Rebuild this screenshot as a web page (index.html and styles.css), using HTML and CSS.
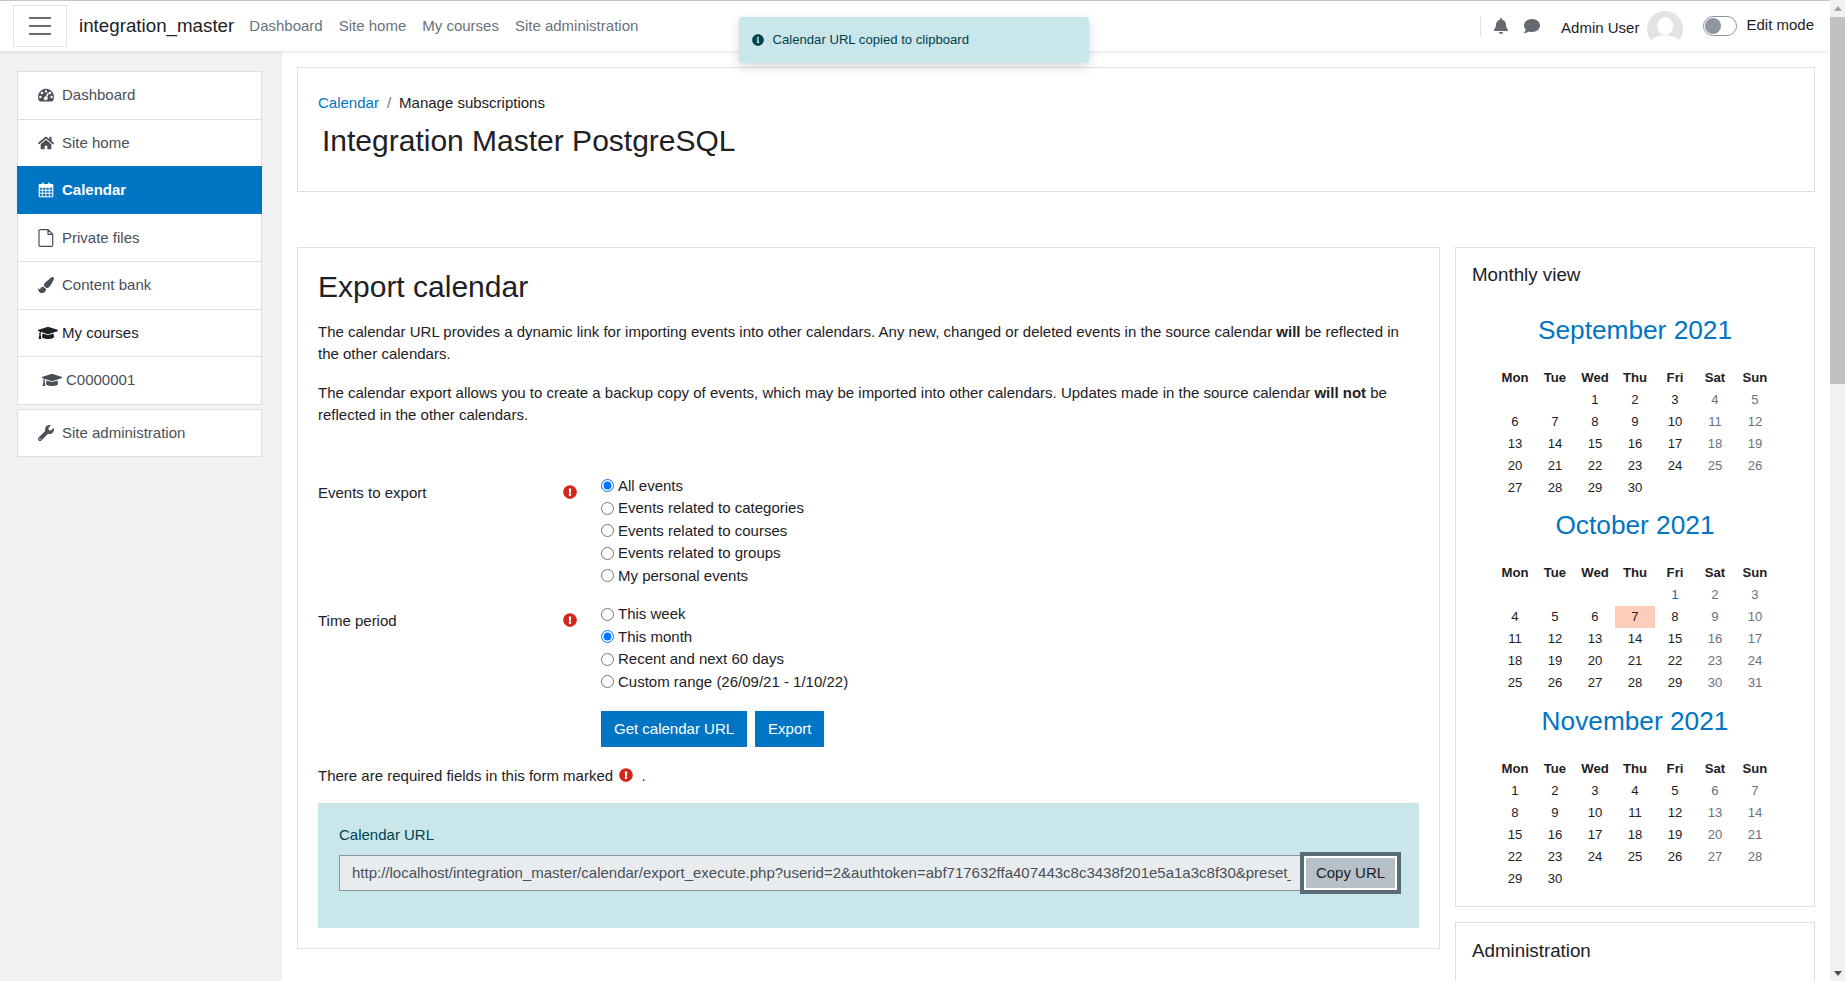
FILE: index.html
```html
<!DOCTYPE html>
<html lang="en">
<head>
  <meta charset="UTF-8">
  <meta name="viewport" content="width=device-width, initial-scale=1.0">
  <title>Export calendar</title>
  <link rel="stylesheet" href="styles.css">
</head>
<body>
  <svg class="icon-defs" width="0" height="0" aria-hidden="true">
    <symbol id="i-cap" viewBox="0 0 640 512"><path d="M622.34 153.2L343.4 67.5c-15.2-4.67-31.6-4.67-46.79 0L17.66 153.2c-23.54 7.23-23.54 38.36 0 45.59l48.63 14.94c-10.67 13.19-17.23 29.28-17.88 46.9C38.78 266.15 32 276.11 32 288c0 10.78 5.68 19.85 13.86 25.65L20.33 428.53C18.11 438.52 25.71 448 35.94 448h56.11c10.24 0 17.84-9.48 15.62-19.47L82.14 313.65C90.32 307.85 96 298.78 96 288c0-11.57-6.47-21.25-15.66-26.87.76-15.02 8.44-28.3 20.69-36.72L296.6 284.5c9.06 2.78 26.44 6.25 46.79 0l278.95-85.7c23.55-7.24 23.55-38.36 0-45.6zM352.79 315.09c-28.53 8.76-52.84 3.92-65.59 0l-145.02-44.55L128 384c0 35.35 85.96 64 192 64s192-28.65 192-64l-14.18-113.47-145.03 44.56z"/></symbol>
    <symbol id="i-required" viewBox="0 0 512 512"><path d="M504 256c0 136.997-111.043 248-248 248S8 392.997 8 256C8 119.083 119.043 8 256 8s248 111.083 248 248zm-248 50c-25.405 0-46 20.595-46 46s20.595 46 46 46 46-20.595 46-46-20.595-46-46-46zm-43.673-165.346l7.418 136c.347 6.364 5.609 11.346 11.982 11.346h48.546c6.373 0 11.635-4.982 11.982-11.346l7.418-136c.375-6.874-5.098-12.654-11.982-12.654h-63.383c-6.884 0-12.356 5.78-11.981 12.654z"/></symbol>
  </svg>

  <div class="page">
    <nav class="navbar">
      <button class="nav-toggle" aria-label="Menu"><span></span><span></span><span></span></button>
      <span class="brand">integration_master</span>
      <a class="nav-link">Dashboard</a>
      <a class="nav-link">Site home</a>
      <a class="nav-link">My courses</a>
      <a class="nav-link">Site administration</a>

      <div class="nav-right">
        <div class="nav-icons">
          <svg class="nav-icon" viewBox="0 0 448 512"><path d="M224 512c35.32 0 63.97-28.65 63.97-64H160.03c0 35.35 28.65 64 63.97 64zm215.39-149.71c-19.32-20.76-55.47-51.99-55.47-154.29 0-77.7-54.48-139.9-127.94-155.16V32c0-17.67-14.32-32-31.98-32s-31.98 14.33-31.98 32v20.84C118.56 68.1 64.08 130.3 64.08 208c0 102.3-36.15 133.53-55.47 154.29-6 6.45-8.66 14.16-8.61 21.71.11 16.4 12.98 32 32.1 32h383.8c19.12 0 32-15.6 32.1-32 .05-7.55-2.61-15.27-8.61-21.71z"/></svg>
          <svg class="nav-icon nav-icon-chat" viewBox="0 0 512 512"><path d="M256 32C114.6 32 0 125.1 0 240c0 49.6 21.4 95 57 130.7C44.5 421.1 2.7 466 2.2 466.5c-2.2 2.3-2.8 5.7-1.5 8.7S4.8 480 8 480c66.3 0 116-31.8 140.6-51.4 32.7 12.3 69 19.4 107.4 19.4 141.4 0 256-93.1 256-208S397.4 32 256 32z"/></svg>
        </div>
        <span class="user-name">Admin User</span>
        <svg class="avatar" viewBox="0 0 36 36">
          <circle cx="18" cy="18" r="18" fill="#e3e3e3"/>
          <ellipse cx="18" cy="15" rx="8" ry="9" fill="#fff"/>
          <path d="M3 30c3-3 7-5 12-5.500h6c5 .5 9 2.500 12 5.500v6H3z" fill="#fff"/>
        </svg>
        <span class="switch"><span class="switch-thumb"></span></span>
        <span class="edit-label">Edit mode</span>
      </div>
    </nav>

    <div class="toast">
      <svg class="toast-icon" viewBox="0 0 512 512"><path d="M256 8C119.043 8 8 119.083 8 256c0 136.997 111.043 248 248 248s248-111.003 248-248C504 119.083 392.957 8 256 8zm0 110c23.196 0 42 18.804 42 42s-18.804 42-42 42-42-18.804-42-42 18.804-42 42-42zm56 254c0 6.627-5.373 12-12 12h-88c-6.627 0-12-5.373-12-12v-24c0-6.627 5.373-12 12-12h12v-64h-12c-6.627 0-12-5.373-12-12v-24c0-6.627 5.373-12 12-12h64c6.627 0 12 5.373 12 12v100h12c6.627 0 12 5.373 12 12v24z"/></svg>
      Calendar URL copied to clipboard
    </div>

    <div class="layout">
      <aside class="sidebar">
        <ul class="side-list">
          <li class="side-item">
            <svg class="side-icon side-icon-dome" viewBox="1 2 22 19"><path fill-rule="evenodd" d="M12 3a11 11 0 0 1 9.500 16.500c-.4.7-1 1-1.700 1H4.200c-.7 0-1.300-.3-1.700-1A11 11 0 0 1 12 3zm0 1.800a1.700 1.700 0 1 0 0 3.400 1.700 1.700 0 0 0 0-3.400zM6.500 7a1.700 1.700 0 1 0 0 3.400 1.700 1.700 0 0 0 0-3.400zm11 0a1.700 1.700 0 1 0 0 3.400 1.700 1.700 0 0 0 0-3.400zM4.300 12.500a1.700 1.700 0 1 0 0 3.400 1.700 1.700 0 0 0 0-3.400zm15.400 0a1.700 1.700 0 1 0 0 3.400 1.700 1.700 0 0 0 0-3.400zM14.700 8.200l-3.100 5.300a2.600 2.600 0 1 0 2.100 1l2.400-5.700z"/></svg>
            Dashboard
          </li>
          <li class="side-item">
            <svg class="side-icon" viewBox="0 0 576 512"><path d="M280.37 148.26L96 300.11V464a16 16 0 0 0 16 16l112.06-.29a16 16 0 0 0 15.92-16V368a16 16 0 0 1 16-16h64a16 16 0 0 1 16 16v95.64a16 16 0 0 0 16 16.05L464 480a16 16 0 0 0 16-16V300L295.67 148.26a12.19 12.19 0 0 0-15.3 0zM571.6 251.47L488 182.56V44.05a12 12 0 0 0-12-12h-56a12 12 0 0 0-12 12v72.61L318.47 43a48 48 0 0 0-61 0L4.34 251.47a12 12 0 0 0-1.6 16.9l25.5 31A12 12 0 0 0 45.15 301l235.22-193.74a12.19 12.19 0 0 1 15.3 0L530.9 301a12 12 0 0 0 16.9-1.6l25.5-31a12 12 0 0 0-1.7-16.93z"/></svg>
            Site home
          </li>
          <li class="side-item side-active">
            <svg class="side-icon side-icon-tall" viewBox="0 0 24 24"><path fill-rule="evenodd" d="M6 1h2.500v2h7V1H18v2h3.500A1.500 1.500 0 0 1 23 4.500v17a1.500 1.500 0 0 1-1.500 1.500h-19A1.500 1.500 0 0 1 1 21.500v-17A1.500 1.500 0 0 1 2.500 3H6zM2.600 8.500v3h3.600v-3zm5 0v3h3.600v-3zm5 0v3h3.600v-3zm5 0v3h3.800v-3zm-15 4.500v3h3.600v-3zm5 0v3h3.600v-3zm5 0v3h3.600v-3zm5 0v3h3.800v-3zm-15 4.500v3.900h3.600v-3.900zm5 0v3.900h3.600v-3.900zm5 0v3.900h3.600v-3.900zm5 0v3.900h3.800v-3.900z"/></svg>
            Calendar
          </li>
          <li class="side-item">
            <svg class="side-icon side-icon-tall" viewBox="0 0 16 18"><path d="M2 .6h8l4.700 4.700v11a1 1 0 0 1-1 1H2a1 1 0 0 1-1-1v-14.700a1 1 0 0 1 1-1zM10 .6v4.700h4.700" fill="none" stroke="currentColor" stroke-width="1.200"/></svg>
            Private files
          </li>
          <li class="side-item">
            <svg class="side-icon" viewBox="0 0 512 512"><path d="M167.02 309.34c-40.12 2.58-76.53 17.86-97.19 72.3-2.35 6.21-8 9.98-14.59 9.98-11.11 0-45.46-27.67-55.25-34.35C0 439.62 37.93 512 128 512c75.86 0 128-43.77 128-120.19 0-3.11-.65-6.08-.97-9.13l-88.01-73.34zM457.89 0c-15.16 0-29.37 6.71-40.21 16.45C213.27 199.05 192 203.34 192 257.09c0 13.7 3.25 26.76 8.73 38.7l63.82 53.18c7.21 1.8 14.64 3.03 22.39 3.03 62.11 0 98.11-45.47 211.16-256.46 7.38-14.35 13.9-29.85 13.9-45.99C512 20.64 486 0 457.89 0z"/></svg>
            Content bank
          </li>
          <li class="side-item side-heading">
            <svg class="side-icon" viewBox="0 0 640 512"><use href="#i-cap"/></svg>
            My courses
          </li>
          <li class="side-item side-sub">
            <svg class="side-icon" viewBox="0 0 640 512"><use href="#i-cap"/></svg>
            C0000001
          </li>
        </ul>
        <ul class="side-list">
          <li class="side-item">
            <svg class="side-icon" viewBox="0 0 512 512"><path d="M507.73 109.1c-2.24-9.03-13.54-12.09-20.12-5.51l-74.36 74.36-67.88-11.31-11.31-67.88 74.36-74.36c6.62-6.62 3.43-17.9-5.66-20.16-47.38-11.74-99.55.91-136.58 37.93-39.64 39.64-50.55 97.1-34.05 147.2L18.74 402.76c-24.99 24.99-24.99 65.51 0 90.5 24.99 24.99 65.51 24.99 90.5 0l213.21-213.21c50.12 16.71 107.47 5.68 147.37-34.22 37.07-37.07 49.7-89.32 37.91-136.73zM64 472c-13.25 0-24-10.75-24-24 0-13.26 10.75-24 24-24s24 10.74 24 24c0 13.25-10.75 24-24 24z"/></svg>
            Site administration
          </li>
        </ul>
      </aside>

      <main class="content">
        <header class="card page-header">
          <div class="breadcrumb"><a>Calendar</a><span class="crumb-sep">/</span><span>Manage subscriptions</span></div>
          <h1>Integration Master PostgreSQL</h1>
        </header>

        <div class="columns">
          <section class="card export-card">
            <h2>Export calendar</h2>
            <p>The calendar URL provides a dynamic link for importing events into other calendars. Any new, changed or deleted events in the source calendar <strong>will</strong> be reflected in the other calendars.</p>
            <p>The calendar export allows you to create a backup copy of events, which may be imported into other calendars. Updates made in the source calendar <strong>will not</strong> be reflected in the other calendars.</p>

            <form class="export-form">
              <div class="form-row">
                <div class="form-label">Events to export <svg class="required"><use href="#i-required"/></svg></div>
                <div class="radio-group">
                  <label><input type="radio" name="events" checked> All events</label>
                  <label><input type="radio" name="events"> Events related to categories</label>
                  <label><input type="radio" name="events"> Events related to courses</label>
                  <label><input type="radio" name="events"> Events related to groups</label>
                  <label><input type="radio" name="events"> My personal events</label>
                </div>
              </div>
              <div class="form-row">
                <div class="form-label">Time period <svg class="required"><use href="#i-required"/></svg></div>
                <div class="radio-group">
                  <label><input type="radio" name="period"> This week</label>
                  <label><input type="radio" name="period" checked> This month</label>
                  <label><input type="radio" name="period"> Recent and next 60 days</label>
                  <label><input type="radio" name="period"> Custom range (26/09/21 - 1/10/22)</label>
                </div>
              </div>
              <div class="form-actions">
                <button type="button" class="btn">Get calendar URL</button>
                <button type="button" class="btn">Export</button>
              </div>
              <div class="required-note">There are required fields in this form marked <svg class="required"><use href="#i-required"/></svg> .</div>
            </form>

            <div class="url-box">
              <div class="url-label">Calendar URL</div>
              <div class="url-row">
                <input class="url-input" type="text" readonly value="http://localhost/integration_master/calendar/export_execute.php?userid=2&amp;authtoken=abf717632ffa407443c8c3438f201e5a1a3c8f30&amp;preset_what=all&amp;preset_time=monthnow">
                <button type="button" class="copy-btn">Copy URL</button>
              </div>
            </div>
          </section>

          <aside class="side-col">
            <section class="card month-card">
              <h5>Monthly view</h5>

              <h3 class="month-title">September 2021</h3>
              <table class="month">
                <tr><th>Mon</th><th>Tue</th><th>Wed</th><th>Thu</th><th>Fri</th><th>Sat</th><th>Sun</th></tr>
                <tr><td></td><td></td><td>1</td><td>2</td><td>3</td><td class="we">4</td><td class="we">5</td></tr>
                <tr><td>6</td><td>7</td><td>8</td><td>9</td><td>10</td><td class="we">11</td><td class="we">12</td></tr>
                <tr><td>13</td><td>14</td><td>15</td><td>16</td><td>17</td><td class="we">18</td><td class="we">19</td></tr>
                <tr><td>20</td><td>21</td><td>22</td><td>23</td><td>24</td><td class="we">25</td><td class="we">26</td></tr>
                <tr><td>27</td><td>28</td><td>29</td><td>30</td><td></td><td></td><td></td></tr>
              </table>

              <h3 class="month-title">October 2021</h3>
              <table class="month">
                <tr><th>Mon</th><th>Tue</th><th>Wed</th><th>Thu</th><th>Fri</th><th>Sat</th><th>Sun</th></tr>
                <tr><td></td><td></td><td></td><td></td><td class="ev">1</td><td class="we">2</td><td class="we">3</td></tr>
                <tr><td>4</td><td>5</td><td>6</td><td class="today">7</td><td>8</td><td class="we">9</td><td class="we">10</td></tr>
                <tr><td>11</td><td>12</td><td>13</td><td>14</td><td>15</td><td class="we">16</td><td class="we">17</td></tr>
                <tr><td>18</td><td>19</td><td>20</td><td>21</td><td>22</td><td class="we">23</td><td class="we">24</td></tr>
                <tr><td>25</td><td>26</td><td>27</td><td>28</td><td>29</td><td class="we">30</td><td class="we">31</td></tr>
              </table>

              <h3 class="month-title">November 2021</h3>
              <table class="month">
                <tr><th>Mon</th><th>Tue</th><th>Wed</th><th>Thu</th><th>Fri</th><th>Sat</th><th>Sun</th></tr>
                <tr><td>1</td><td>2</td><td>3</td><td>4</td><td>5</td><td class="we">6</td><td class="we">7</td></tr>
                <tr><td>8</td><td>9</td><td>10</td><td>11</td><td>12</td><td class="we">13</td><td class="we">14</td></tr>
                <tr><td>15</td><td>16</td><td>17</td><td>18</td><td>19</td><td class="we">20</td><td class="we">21</td></tr>
                <tr><td>22</td><td>23</td><td>24</td><td>25</td><td>26</td><td class="we">27</td><td class="we">28</td></tr>
                <tr><td>29</td><td>30</td><td></td><td></td><td></td><td></td><td></td></tr>
              </table>
            </section>

            <section class="card admin-card">
              <h5>Administration</h5>
            </section>
          </aside>
        </div>
      </main>
    </div>
  </div>

  <div class="scrollbar">
    <span class="sb-arrow sb-up"></span>
    <div class="sb-track"><div class="sb-thumb"></div></div>
    <span class="sb-arrow sb-down"></span>
  </div>
</body>
</html>
```

FILE: styles.css
```css
* {
  box-sizing: border-box;
}

html, body {
  height: 100%;
  margin: 0;
  overflow: hidden;
}

body {
  display: flex;
  font-family: "Liberation Sans", Arial, sans-serif;
  font-size: 15px;
  line-height: 22.5px;
  color: #1d2125;
  background-color: #fff;
}

.icon-defs {
  position: absolute;
}

.page {
  flex: 1;
  min-width: 0;
  height: 981px;
  overflow: hidden;
  position: relative;
}

/* top bar */
.navbar {
  height: 51px;
  display: flex;
  align-items: center;
  background-color: #fff;
  border-top: 1px solid #c4c4c4;
  box-shadow: 0 2px 4px rgba(0, 0, 0, 0.08);
  position: relative;
}

.nav-toggle {
  width: 54px;
  height: 42px;
  margin-left: 13px;
  margin-right: 12px;
  padding: 0;
  border: 1px solid #e3e3e3;
  background: #fff;
  display: flex;
  flex-direction: column;
  align-items: center;
  justify-content: center;
  gap: 6px;
}

.nav-toggle span {
  display: block;
  width: 22px;
  height: 2px;
  background-color: #6a6a6a;
}

.brand {
  font-size: 18.75px;
  margin-right: 15px;
}

.nav-link {
  color: #6a737b;
  margin-right: 16px;
}

.nav-right {
  margin-left: auto;
  display: flex;
  align-items: center;
  padding-right: 16px;
}

.nav-icons {
  display: flex;
  align-items: center;
  height: 21px;
  padding-left: 13px;
  border-left: 1px solid #e3e3e3;
}

.nav-icon {
  width: 14px;
  height: 16px;
  fill: #646a70;
}

.nav-icon-chat {
  margin-left: 16px;
  width: 16px;
}

.user-name {
  margin-left: 21px;
  margin-top: 5px;
}

.avatar {
  width: 36px;
  height: 36px;
  margin-left: 8px;
  margin-top: 5px;
}

.switch {
  width: 34px;
  height: 20px;
  margin-left: 20px;
  margin-top: -1px;
  border: 1px solid #8f959e;
  border-radius: 10px;
  background-color: #fff;
  padding: 1px;
}

.switch-thumb {
  display: block;
  width: 16px;
  height: 16px;
  border-radius: 50%;
  background-color: #8f959e;
}

.edit-label {
  margin-left: 9px;
  margin-top: -1px;
}

.toast {
  position: absolute;
  left: 739px;
  top: 17px;
  width: 350px;
  height: 46px;
  display: flex;
  align-items: center;
  gap: 8.500px;
  padding-left: 13px;
  font-size: 13.13px;
  color: #00434e;
  background-color: #c9e6ea;
  border-radius: 3px;
  box-shadow: 0 4px 12px rgba(0, 0, 0, 0.15);
}

.toast-icon {
  width: 12px;
  height: 12px;
  fill: #00434e;
}

/* sidebar */
.layout {
  display: flex;
}

.sidebar {
  width: 282px;
  height: 930px;
  padding: 20px 20px 0 17px;
  background-color: #f2f2f2;
  flex-shrink: 0;
}

.side-list {
  list-style: none;
  margin: 0 0 4.400px;
  padding: 0;
  background-color: #fff;
  border: 1px solid #dfdfdf;
}

.side-item {
  display: flex;
  align-items: center;
  height: 47.5px;
  padding-left: 20px;
  color: #495057;
  border-bottom: 1px solid #dfdfdf;
}

.side-item:last-child {
  border-bottom: 0;
  height: 46.5px;
}

.side-active {
  color: #fff;
  font-weight: bold;
  background-color: #0075c3;
  height: 48.4px;
  margin: -1px -1px 0.11px;
  padding-left: 21px;
  border-bottom: 0;
}

.side-heading {
  color: #1d2125;
}

.side-sub {
  padding-left: 24px;
}

.side-icon {
  width: 16px;
  height: 16px;
  margin-right: 8px;
  fill: currentColor;
  flex-shrink: 0;
}

.side-icon-tall {
  height: 18px;
}

.side-icon-dome {
  height: 14px;
}

.side-heading .side-icon,
.side-sub .side-icon {
  width: 20px;
  margin-right: 4px;
}

/* main */
.content {
  flex: 1;
  min-width: 0;
  padding: 16px 15px 0;
}

.card {
  background-color: #fff;
  border: 1px solid #dfdfdf;
}

.page-header {
  height: 125px;
  padding: 24px 20px 0;
}

.breadcrumb {
  display: flex;
}

.breadcrumb a {
  color: #0075c3;
}

.crumb-sep {
  color: #6a737b;
  margin: 0 8px;
}

h1 {
  margin: 8px 0 0 4px;
  font-size: 30px;
  font-weight: normal;
  line-height: 36px;
}

.columns {
  display: flex;
  gap: 15px;
  margin-top: 55px;
}

.export-card {
  width: 1143px;
  height: 702px;
  padding: 21px 20px 0;
}

h2 {
  margin: 0 0 15.600px;
  font-size: 30px;
  font-weight: normal;
  line-height: 36px;
}

.export-card p {
  margin: 0 0 16px;
}

.export-form {
  margin-top: 48px;
}

.form-row {
  display: flex;
  margin-bottom: 15.950px;
}

.form-label {
  width: 283px;
  padding: 7px 24px 0 0;
  display: flex;
  justify-content: space-between;
  align-items: flex-start;
}

.required {
  width: 14px;
  height: 14px;
  fill: #d3271e;
  margin-top: 3px;
}

.radio-group {
  display: flex;
  flex-direction: column;
}

.radio-group label {
  display: flex;
  align-items: center;
  height: 22.5px;
}

.radio-group input {
  width: 13px;
  height: 13px;
  margin: 0 4px 0 0;
}

.form-actions {
  display: flex;
  gap: 8px;
  margin: 18px 0 18px 283px;
}

.btn {
  height: 36px;
  padding: 0 13px;
  border: 0;
  background-color: #0075c3;
  color: #fff;
  font: inherit;
}

.required-note {
  display: flex;
  align-items: flex-start;
  white-space: pre;
}

.required-note .required {
  margin: 3px 4px 0 2px;
}

.url-box {
  margin-top: 15.400px;
  height: 125px;
  padding: 20.700px 21px 0;
  background-color: #c9e6ea;
  color: #00434e;
}

.url-label {
  margin-bottom: 8.800px;
}

.url-row {
  display: flex;
  align-items: center;
}

.url-input {
  width: 962px;
  height: 36px;
  padding: 0 9px 0 12px;
  border: 1px solid #8f959e;
  background-color: #e9ecef;
  color: #495057;
  font: inherit;
}

.copy-btn {
  width: 89px;
  height: 30px;
  margin-left: 5px;
  flex-shrink: 0;
  padding: 0;
  border: 0;
  background-color: #b6c0c9;
  color: #1d2125;
  font: inherit;
  box-shadow: 0 0 0 2px #fff, 0 0 0 6px #5a6b78;
}

/* right column */
.side-col {
  width: 360px;
}

.month-card {
  height: 660px;
  padding: 16px 16px 0;
}

h5 {
  margin: 0;
  font-size: 18.75px;
  font-weight: normal;
  line-height: 22.5px;
}

.month-title {
  margin: 11.800px 0 20.200px;
  font-size: 26.25px;
  font-weight: normal;
  line-height: 31.5px;
  text-align: center;
  color: #0075c3;
}

h5 + .month-title {
  margin-top: 28.400px;
}

.month {
  width: 280px;
  margin: 0 auto;
  border-collapse: collapse;
  table-layout: fixed;
  font-size: 13.13px;
}

.month th,
.month td {
  height: 22px;
  padding: 0;
  text-align: center;
  line-height: 22px;
}

.month .we {
  color: #6a737b;
}

.month .ev {
  color: #0075c3;
}

.month .today {
  background-color: #fdcdb9;
}

.admin-card {
  margin-top: 15px;
  height: 120px;
  padding: 17px 16px 0;
}

/* drawn scrollbar, the page itself does not scroll here */
.scrollbar {
  width: 15px;
  height: 981px;
  flex-shrink: 0;
  background-color: #f1f1f1;
  display: flex;
  flex-direction: column;
  align-items: center;
}

.sb-arrow {
  width: 0;
  height: 0;
  margin: 6px 0 5px;
  border-left: 4px solid transparent;
  border-right: 4px solid transparent;
}

.sb-up {
  border-bottom: 5px solid #a3a3a3;
}

.sb-down {
  border-top: 5px solid #505050;
}

.sb-track {
  flex: 1;
  width: 100%;
}

.sb-thumb {
  width: 100%;
  height: 367px;
  margin-top: 1px;
  background-color: #c1c1c1;
}
```
